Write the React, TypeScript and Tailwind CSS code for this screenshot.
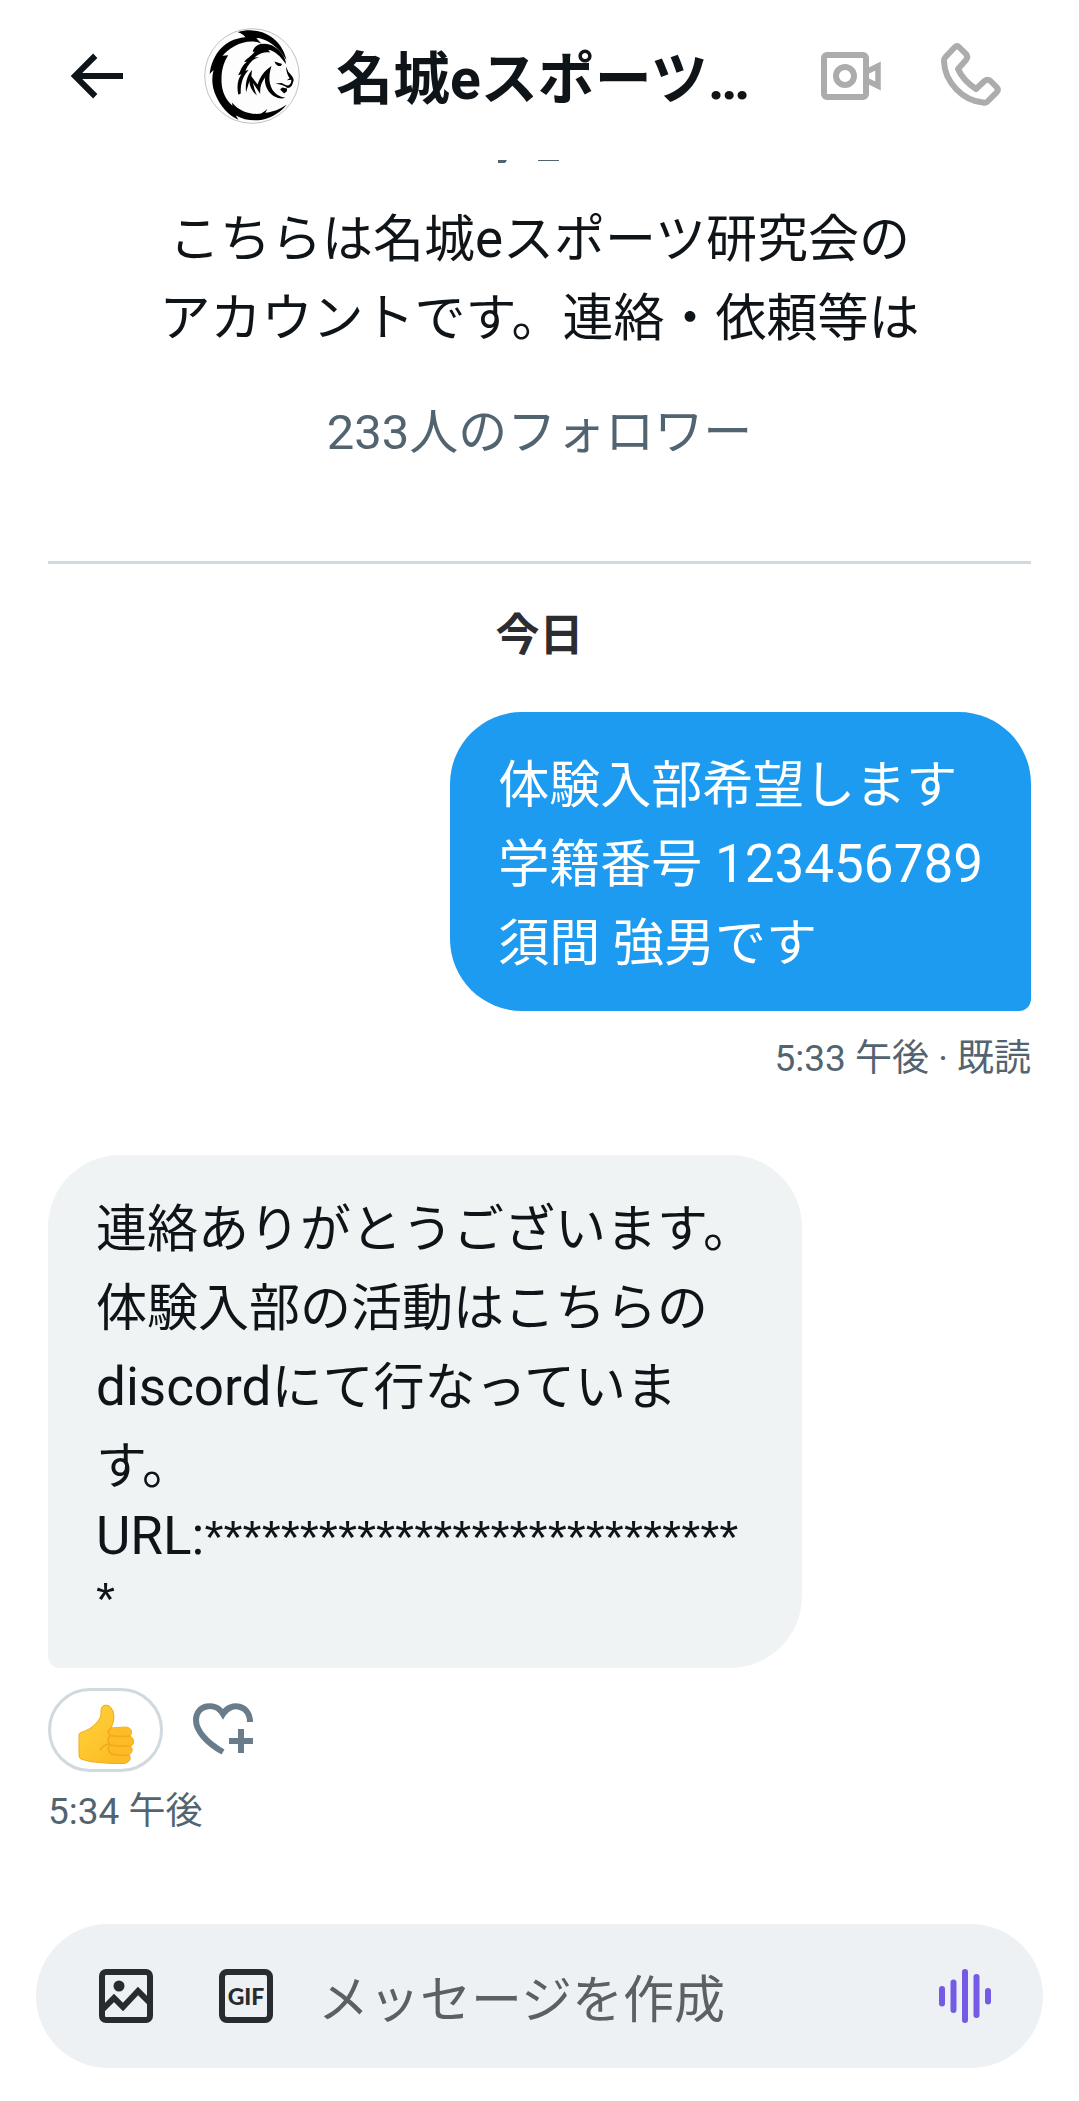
import type { ReactNode } from "react";

function Latin({ children }: { children: ReactNode }) {
  return <span className="text-[53px]">{children}</span>;
}

function BackIcon() {
  return (
    <svg viewBox="0 0 24 24" className="size-[72px]" fill="#0f1419" aria-hidden="true">
      <path d="M7.414 13l5.043 5.04-1.414 1.42L3.586 12l7.457-7.46 1.414 1.42L7.414 11H21v2H7.414z" />
    </svg>
  );
}

function VideoIcon() {
  return (
    <svg viewBox="0 0 72 72" className="size-[72px]" fill="none" stroke="#acacac" strokeWidth="6" aria-hidden="true">
      <rect x="9" y="15" width="42" height="42" rx="3" />
      <circle cx="30" cy="36" r="9" />
      <path d="M52 31.500l11-5.500v20l-11-5.500" strokeWidth="5.500" />
    </svg>
  );
}

function PhoneIcon() {
  return (
    <svg viewBox="0 0 72 72" className="size-[72px]" fill="none" stroke="#acacac" strokeWidth="6" strokeLinejoin="round" aria-hidden="true">
      <path d="M19.500 7.500Q22 5 24.500 7.500L31 14Q33.500 17 31 20L23 29C27 38 32 43 41 49L49.500 41Q52.500 38.500 55.500 41L61.500 47Q64 50 61.500 52.500L52 62Q51 63 48 62.500C28 60.500 9.500 42.500 9 21Q9 18.500 10.500 17Z" />
    </svg>
  );
}

function LionAvatar() {
  return (
    <svg viewBox="26 24 290 290" className="size-24 shrink-0" role="img" aria-label="名城eスポーツ研究会">
      <circle cx="171" cy="169" r="143" fill="#fdfdfd" stroke="#b5b5b5" strokeWidth="2.500" />
      <path d="M45 150C51 122 64 96 84 79C104 62 126 54 151 52C146 45 138 40 128 37C160 26 197 31 225 48C252 65 269 91 275 121C261 98 247 83 228 70C213 60 198 54 184 54L199 71C176 60 145 64 119 78C101 88 89 98 82 108L99 106C83 132 78 156 79 187C80 216 91 239 112 259L110 249C132 275 165 286 196 283C205 280 211 274 218 268L211 280C235 278 255 269 276 255C259 277 232 295 202 301C174 306 145 301 122 288L130 301C98 288 75 257 63 231C50 202 48 177 55 151L43 163Z" />
      <path d="M173 96C177 80 191 71 207 72C226 71 248 84 261 101C270 113 274 124 273 133C256 108 239 93 220 90L226 98C210 95 193 101 178 113L192 112C173 117 160 132 151 153L161 151C143 169 136 194 137 222L130 226C124 201 128 179 139 164L129 167C136 156 139 137 156 126L147 127C155 116 167 112 179 96Z" />
      <path d="M153 218C150 188 157 167 171 151L169 170L188 195C195 172 207 154 230 139C222 163 221 187 230 205C238 221 251 231 272 235C254 241 234 232 221 215C212 201 208 186 211 173C200 188 194 202 196 223L174 190C177 204 181 218 186 228C172 216 164 203 163 185Z" />
      <path d="M239 125L262 133L258 139C250 140 242 136 239 125Z" />
      <path d="M274 141L281 157C286 163 296 171 297 182L292 197C287 205 277 208 272 201L261 196L242 192L260 190L274 197C282 199 288 194 289 187L290 180L276 182L285 176C280 170 274 155 274 141Z" />
      <path d="M262 204L277 207L276 216L268 222L256 210Z" />
    </svg>
  );
}

function ThumbsUp() {
  return (
    <svg viewBox="0 0 56 60" className="h-[60px] w-14" aria-hidden="true">
      <defs>
        <linearGradient id="skin" x1="0" y1="0" x2="1" y2="1">
          <stop offset="0" stopColor="#ffd23f" />
          <stop offset="1" stopColor="#fbb81c" />
        </linearGradient>
      </defs>
      <path d="M1 31Q1 29 3 28.500C11 26 18 21 22 14C24 10 22 6 24 3Q27-.5 32 2.500Q36 6 36 13Q36 18 33 24L48 23Q54 24 53.500 29Q53 31 52 32Q57 35 55 40Q54 42 52 42Q56 45 53 49L51 51Q54 55 50 58Q48 60 43 59.500C30 60 21 58 15 58Q9 57 3 55Q1 54 1 51Z" fill="url(#skin)" stroke="#f2a91b" strokeWidth="1" />
      <path d="M33 24Q29 28 32 31Q28 36 32 41Q28 45 32 50L34 59L47 59Q53 57 51 51Q56 47 52 42Q57 38 52 32Q56 25 48 23Z" fill="#fdbb25" />
      <path d="M33 24Q28 28 32 31.500Q42 33 52 32M32 31.500Q28 36 32 41Q42 43 52 42M32 41Q28 45 33 50Q42 52 51 51M31 40Q25 41 22 46" fill="none" stroke="#f2a91b" strokeWidth="1.500" strokeLinecap="round" />
    </svg>
  );
}

function HeartPlusIcon() {
  return (
    <svg viewBox="0 0 60 54" className="h-[54px] w-[60px]" fill="none" stroke="#687c8b" strokeWidth="6" aria-hidden="true">
      <path d="M30 49C14 40 3 28 3 17C3 2 22-2 30 11C38-2 57 2 57 19" strokeLinejoin="miter" />
      <path d="M48 26v24M36 38h24" />
    </svg>
  );
}

function ImageIcon() {
  return (
    <svg viewBox="0 0 72 72" className="size-[72px]" fill="none" stroke="#272c31" strokeWidth="6" aria-hidden="true">
      <rect x="12" y="12" width="48" height="48" rx="4" />
      <circle cx="29" cy="26" r="5.500" fill="#272c31" stroke="none" />
      <path d="M13 49l11-11 9 9 15-16 12 12" />
    </svg>
  );
}

function GifIcon() {
  return (
    <span className="m-[9px] flex size-[54px] items-center justify-center rounded-[8px] border-6 border-[#272c31] font-[Lato] text-[23px] leading-none font-black text-[#272c31]">
      GIF
    </span>
  );
}

function VoiceIcon() {
  return (
    <svg viewBox="0 0 54 56" className="h-14 w-[54px]" stroke="#755ae6" strokeWidth="6" strokeLinecap="round" aria-hidden="true">
      <path d="M4 21v14.500M15.500 14.500V42M27 4v48M38.500 9v38M50 23v10.500" />
    </svg>
  );
}

export default function App() {
  return (
    <div
      lang="ja"
      className="flex min-h-screen flex-col bg-white font-[Roboto,'Noto_Sans_CJK_JP',sans-serif] text-[51px] leading-[79px] text-[#0f1419]"
    >
      <header className="flex h-[152px] items-center pr-[72px] pl-[60px]">
        <button type="button" aria-label="戻る" className="shrink-0">
          <BackIcon />
        </button>
        <div className="ml-[72px] flex min-w-0 flex-1 items-center gap-9">
          <LionAvatar />
          <h1 className="truncate pt-2 text-[57px] leading-[84px] font-bold">名城eスポーツ…</h1>
        </div>
        <div className="flex shrink-0 gap-12">
          <button type="button" aria-label="ビデオ通話">
            <VideoIcon />
          </button>
          <button type="button" aria-label="音声通話">
            <PhoneIcon />
          </button>
        </div>
      </header>

      <main className="flex flex-col px-12">
        <svg viewBox="0 0 92 4" className="mt-2 h-1 w-[92px] self-center" aria-hidden="true">
          <path d="M4 0h9l-2 3H4Z" fill="#536471" />
          <path d="M44 0h21v1H44Z" fill="#536471" />
        </svg>

        <section className="flex flex-col text-center">
          <p className="mt-9">
            こちらは名城<Latin>e</Latin>スポーツ研究会の
            <br />
            アカウントです。連絡・依頼等は
          </p>
          <p className="mt-[35px] text-[49px] text-[#536471]">233人のフォロワー</p>
        </section>

        <hr className="mt-[89px] border-t-3 border-[#cfd9de]" />
        <h2 className="mt-10 text-center text-[44px] leading-[64px] font-bold text-[#2b2d31]">今日</h2>

        <article className="mt-11 flex flex-col items-end">
          <p className="rounded-[72px] rounded-br-[12px] bg-[#1d9bf0] px-12 pt-[34px] pb-7 text-white">
            体験入部希望します
            <br />
            学籍番号 <Latin>123456789</Latin>
            <br />
            須間 強男です
          </p>
          <p className="mt-5 text-[37px] leading-[56px] text-[#536471]">5:33 午後 · 既読</p>
        </article>

        <article className="mt-[68px] flex flex-col items-start">
          <div className="rounded-[72px] rounded-bl-[12px] bg-[#eff3f4] px-12 pt-[35px] pb-[38px]">
            <p>
              連絡ありがとうございます。
              <br />
              体験入部の活動はこちらの
              <br />
              <Latin>discord</Latin>にて行なっていま
              <br />
              す。
            </p>
            <p className="leading-[61px]">
              <Latin>URL:</Latin>
              <span className="font-['Liberation_Sans'] text-[49px]">
                ****************************
                <br />*
              </span>
            </p>
          </div>
          <div className="mt-5 flex items-center gap-[30px]">
            <button
              type="button"
              aria-label="いいねのリアクション"
              className="flex h-[84px] w-[115px] items-center justify-center rounded-full border-3 border-[#cfd9de] pt-2"
            >
              <ThumbsUp />
            </button>
            <button type="button" aria-label="リアクションを追加">
              <HeartPlusIcon />
            </button>
          </div>
          <p className="mt-3 text-[37px] leading-[56px] text-[#536471]">5:34 午後</p>
        </article>
      </main>

      <form className="mx-9 mt-auto mb-[33px] flex h-36 items-center rounded-full bg-[#eef1f4] pr-[51px] pl-[54px]">
        <button type="button" aria-label="画像を追加" className="shrink-0">
          <ImageIcon />
        </button>
        <button type="button" aria-label="GIFを追加" className="ml-12 shrink-0">
          <GifIcon />
        </button>
        <input
          type="text"
          aria-label="メッセージを作成"
          placeholder="メッセージを作成"
          className="ml-9 min-w-0 flex-1 bg-transparent pt-2 outline-none placeholder:text-[#5c6063]"
        />
        <button type="button" aria-label="音声メッセージを録音" className="shrink-0">
          <VoiceIcon />
        </button>
      </form>
    </div>
  );
}
